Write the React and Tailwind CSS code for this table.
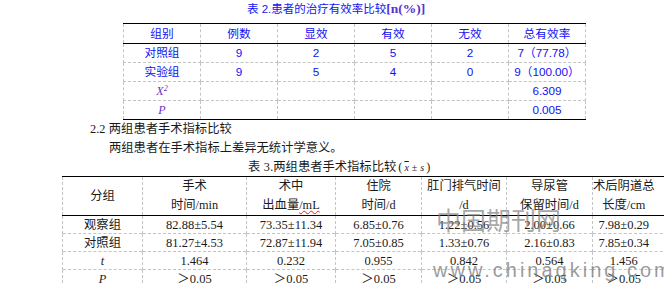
import React from 'react'

const cjk = "font-['Liberation_Sans','Noto_Sans_CJK_SC',sans-serif]"
const serif = "font-['Liberation_Serif','Noto_Sans_CJK_SC',serif]"

const t1Rows = [
  ['对照组', '9', '2', '5', '2', '7（77.78）'],
  ['实验组', '9', '5', '4', '0', '9（100.00）'],
]

const t2Rows = [
  ['观察组', '82.88±5.54', '73.35±11.34', '6.85±0.76', '1.22±0.56', '2.00±0.66', '7.98±0.29'],
  ['对照组', '81.27±4.53', '72.87±11.94', '7.05±0.85', '1.33±0.76', '2.16±0.83', '7.85±0.34'],
]

const dashed = 'border border-dashed border-[#c4c4c4]'
const lastRow = 'border-x border-t border-dashed border-x-[#c4c4c4] border-t-[#c4c4c4]'
const bodyCell = 'border-l border-t border-dashed border-[#c4c4c4] p-0 text-center leading-[16px] whitespace-nowrap'

function App() {
  return (
    <div className={`relative w-[664px] h-[283px] overflow-hidden bg-white ${cjk}`}>
      {/* 表 2 标题 */}
      <p className="pl-[247px] h-[17px] leading-[17px] text-[11.5px] text-[#1414f0] whitespace-nowrap">
        表 2.患者的治疗有效率比较<span className={`${serif} font-bold text-[13.5px] text-[#5a2fd0]`}>[n(%)]</span>
      </p>

      <table className="ml-[123px] mt-[6px] w-[463px] table-fixed border-collapse text-[11.7px] text-[#1010f4]">
        <tbody>
          <tr className="h-[20px] border-t-[1.5px] border-t-black border-b border-b-black">
            {['组别', '例数', '显效', '有效', '无效', '总有效率'].map((h) => (
              <td key={h} className="border-x border-dashed border-x-[#c4c4c4] p-0 text-center leading-[16px]">{h}</td>
            ))}
          </tr>
          {t1Rows.map((r) => (
            <tr key={r[0]} className="h-[19px]">
              {r.map((c, i) => (
                <td key={i} className={`${dashed} p-0 text-center leading-[16px]`}>{c}</td>
              ))}
            </tr>
          ))}
          <tr className="h-[19px]">
            <td className={`${dashed} p-0 text-center leading-[16px] ${serif} italic text-[12px] text-[#6a30c8]`}>X<sup className="text-[8px]">2</sup></td>
            <td className={dashed}></td>
            <td className={dashed}></td>
            <td className={dashed}></td>
            <td className={dashed}></td>
            <td className={`${dashed} p-0 text-center leading-[16px]`}>6.309</td>
          </tr>
          <tr className="h-[19px] border-b-[1.5px] border-b-black">
            <td className={`${lastRow} p-0 text-center leading-[16px] font-['Liberation_Serif',serif] italic text-[12px] text-[#6a30c8]`}>P</td>
            <td className={lastRow}></td>
            <td className={lastRow}></td>
            <td className={lastRow}></td>
            <td className={lastRow}></td>
            <td className={`${lastRow} p-0 text-center leading-[16px]`}>0.005</td>
          </tr>
        </tbody>
      </table>

      <div className="h-[56px] text-[12.3px] text-[#1a1a1a] leading-[19px] whitespace-nowrap">
        <p className="pl-[90px] h-[19px]"><span className={serif}>2.2</span> 两组患者手术指标比较</p>
        <p className="pl-[109px] h-[19px]">两组患者在手术指标上差异无统计学意义。</p>
        <p className="pl-[248px] h-[18px] leading-[18px]">
          表 <span className={serif}>3</span>.两组患者手术指标比较
          <span className={`${serif} ml-[2px]`}>(<span className="italic text-[10px] overline mx-[2px]">x</span><span className="text-[10px] mx-[1px]">±</span><span className="italic text-[10px] mx-[2px]">s</span>)</span>
        </p>
      </div>

      <table className="ml-[62px] w-[610px] table-fixed border-collapse text-[12.3px] text-[#1a1a1a]">
        <colgroup>
          <col className="w-[80px]" />
          <col className="w-[104px]" />
          <col className="w-[89px]" />
          <col className="w-[86px]" />
          <col className="w-[85px]" />
          <col className="w-[86px]" />
          <col className="w-[80px]" />
        </colgroup>
        <tbody>
          <tr className="h-[37px] border-t-[1.5px] border-t-black border-b border-b-black leading-[19px]">
            <td className="border-x border-dashed border-x-[#c4c4c4] p-0 text-center">分组</td>
            <td className="border-x border-dashed border-x-[#c4c4c4] p-0 text-center">手术<br />时间<span className={serif}>/min</span></td>
            <td className="border-x border-dashed border-x-[#c4c4c4] p-0 text-center">术中<br />出血量<span className={`${serif} underline decoration-wavy decoration-[#e02020] decoration-1`}>/mL</span></td>
            <td className="border-x border-dashed border-x-[#c4c4c4] p-0 text-center">住院<br />时间<span className={serif}>/d</span></td>
            <td className="border-x border-dashed border-x-[#c4c4c4] p-0 text-center">肛门排气时间<br /><span className={serif}>/d</span></td>
            <td className="border-x border-dashed border-x-[#c4c4c4] p-0 text-center">导尿管<br />保留时间<span className={serif}>/d</span></td>
            <td className="border-l border-dashed border-l-[#c4c4c4] p-0 pr-[18px] text-center whitespace-nowrap">术后阴道总<br />长度<span className={serif}>/cm</span></td>
          </tr>
          {t2Rows.map((r) => (
            <tr key={r[0]} className="h-[18px]">
              {r.map((c, i) => (
                <td key={i} className={`${bodyCell} ${i ? `${serif} text-[12.5px]` : ''} ${i === 6 ? 'pr-[18px]' : ''}`}>{c}</td>
              ))}
            </tr>
          ))}
          <tr className="h-[18px]">
            <td className={`${bodyCell} ${serif} italic`}>t</td>
            {['1.464', '0.232', '0.955', '0.842', '0.564', '1.456'].map((c, i) => (
              <td key={i} className={`${bodyCell} ${serif} text-[12.5px] ${i === 5 ? 'pr-[18px]' : ''}`}>{c}</td>
            ))}
          </tr>
          <tr className="h-[18px]">
            <td className={`${bodyCell} ${serif} italic`}>P</td>
            {[0, 1, 2, 3, 4, 5].map((i) => (
              <td key={i} className={`${bodyCell} ${serif} text-[12.5px] ${i === 5 ? 'pr-[18px]' : ''}`}>＞0.05</td>
            ))}
          </tr>
        </tbody>
      </table>

      {/* 水印 */}
      <div className="absolute left-[436px] top-[207px] font-['Liberation_Serif','Noto_Sans_CJK_SC',serif] text-[25px] leading-[30px] text-[#808080]/70 whitespace-nowrap">中国期刊网</div>
      <div className="absolute left-[433px] top-[258px] font-['Liberation_Sans',sans-serif] text-[20px] leading-[24px] tracking-[3px] text-[#7a7a7a]/75 whitespace-nowrap">www.chinaqking.com</div>
    </div>
  )
}

export default App
